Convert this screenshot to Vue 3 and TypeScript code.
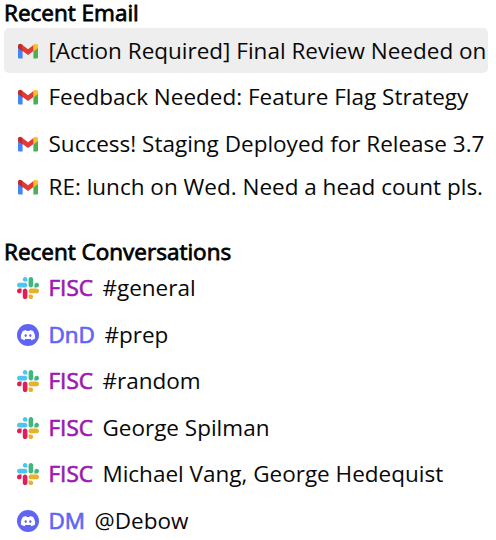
<script setup lang="ts">
type Service = 'slack' | 'discord'

interface Email {
  subject: string
  selected?: boolean
}

interface Conversation {
  service: Service
  workspace: string
  name: string
}

const emails: Email[] = [
  { subject: '[Action Required] Final Review Needed on', selected: true },
  { subject: 'Feedback Needed: Feature Flag Strategy' },
  { subject: 'Success! Staging Deployed for Release 3.7' },
  { subject: 'RE: lunch on Wed. Need a head count pls.' },
]

const conversations: Conversation[] = [
  { service: 'slack', workspace: 'FISC', name: '#general' },
  { service: 'discord', workspace: 'DnD', name: '#prep' },
  { service: 'slack', workspace: 'FISC', name: '#random' },
  { service: 'slack', workspace: 'FISC', name: 'George Spilman' },
  { service: 'slack', workspace: 'FISC', name: 'Michael Vang, George Hedequist' },
  { service: 'discord', workspace: 'DM', name: '@Debow' },
]
</script>

<template>
  <main class="panel">
    <section class="emails">
      <h2 class="heading">Recent Email</h2>
      <ul class="list">
        <li v-for="mail in emails" :key="mail.subject" class="row" :class="{ selected: mail.selected }">
          <svg class="icon" viewBox="0 0 22 22">
            <path fill="#4285f4" d="M1 5v12.200c0 .8.6 1.400 1.400 1.400H5.600V9z" />
            <path fill="#4caf50" d="M21 5v12.200c0 .8-.6 1.400-1.400 1.400h-3.200V9z" />
            <path fill="#e53935" d="M5.200 4.700 11 9.200l5.800-4.500v6L11 15.100l-5.800-4.400z" />
            <path fill="#c62828" d="M1 5.800v2.300l4.600 3.400V5l-.9-.7C3.200 3.100 1 4.100 1 5.800z" />
            <path fill="#fbc02d" d="M21 5.800v2.300l-4.600 3.400V5l.9-.7c1.500-1.200 3.700-.2 3.700 1.500z" />
          </svg>
          <span class="label">{{ mail.subject }}</span>
        </li>
      </ul>
    </section>

    <section class="conversations">
      <h2 class="heading">Recent Conversations</h2>
      <ul class="list">
        <li v-for="chat in conversations" :key="chat.name" class="row">
          <svg v-if="chat.service === 'slack'" class="icon" viewBox="0 0 122.800 122.800">
            <path fill="#e01e5a" d="M25.800 77.600c0 7.100-5.800 12.900-12.900 12.900S0 84.700 0 77.600s5.800-12.900 12.900-12.900h12.900v12.900zm6.500 0c0-7.100 5.800-12.900 12.900-12.900s12.900 5.800 12.900 12.900v32.300c0 7.100-5.800 12.900-12.900 12.900s-12.900-5.800-12.900-12.900V77.600z" />
            <path fill="#4dc4f2" d="M45.200 25.800c-7.100 0-12.900-5.800-12.900-12.900S38.100 0 45.200 0s12.900 5.800 12.900 12.900v12.900H45.200zm0 6.500c7.100 0 12.900 5.800 12.900 12.900s-5.800 12.900-12.900 12.900H12.900C5.800 58.100 0 52.300 0 45.200s5.800-12.900 12.900-12.900h32.300z" />
            <path fill="#3eb67e" d="M97 45.200c0-7.100 5.800-12.900 12.900-12.900s12.900 5.800 12.900 12.900-5.800 12.900-12.900 12.900H97V45.200zm-6.500 0c0 7.100-5.800 12.900-12.900 12.900s-12.900-5.800-12.900-12.900V12.900C64.700 5.800 70.500 0 77.600 0s12.900 5.800 12.900 12.900v32.300z" />
            <path fill="#e8b12c" d="M77.600 97c7.100 0 12.900 5.800 12.900 12.900s-5.800 12.900-12.900 12.900-12.900-5.800-12.900-12.900V97h12.900zm0-6.500c-7.100 0-12.900-5.800-12.900-12.900s5.800-12.900 12.900-12.900h32.300c7.100 0 12.900 5.800 12.900 12.900s-5.800 12.900-12.900 12.900H77.600z" />
          </svg>
          <svg v-else class="icon" viewBox="0 0 22 22">
            <circle cx="11" cy="11" r="11" fill="#6064f2" />
            <path fill="#fff" d="M9.100 6c-1.300.2-2.300.5-3.300 1-1.600 2.500-2.100 5-1.900 7.500 1.200.9 2.400 1.400 3.700 1.700l.9-1.400c1.600.4 3.400.4 5 0l.9 1.400c1.300-.3 2.500-.8 3.700-1.700.2-2.500-.3-5-1.900-7.500-1-.5-2-.8-3.300-1l-.5 1c-.9-.1-1.900-.1-2.800 0z" />
            <ellipse cx="8.700" cy="11.600" rx="1.150" ry="1.300" fill="#6064f2" />
            <ellipse cx="13.300" cy="11.600" rx="1.150" ry="1.300" fill="#6064f2" />
          </svg>
          <span class="workspace" :class="chat.service">{{ chat.workspace }}</span>
          <span class="label">{{ chat.name }}</span>
        </li>
      </ul>
    </section>
  </main>
</template>

<style>
body {
  margin: 0;
  background: #fff;
}
</style>

<style scoped>
.panel {
  box-sizing: border-box;
  width: 496px;
  height: 540px;
  padding: 0 8px 0 4px;
  font-family: 'Open Sans', sans-serif;
  font-size: 22.500px;
  color: #080808;
}

.heading {
  height: 28px;
  margin: 0;
  font-weight: 400;
  font-size: 22.500px;
  line-height: 26px;
  white-space: nowrap;
  color: #000;
  -webkit-text-stroke: 0.800px currentColor;
}

.list {
  margin: 0;
  padding: 0;
  list-style: none;
}

.row {
  display: flex;
  align-items: center;
  box-sizing: border-box;
  height: 46.500px;
  padding-left: 12.500px;
  white-space: nowrap;
}

.emails .row {
  height: 47px;
}

.emails .row.selected {
  height: 45px;
  border-radius: 5px;
  background: #eee;
}

.emails .row:last-child {
  height: 40px;
}

.conversations {
  padding-top: 32px;
}

.conversations .list {
  margin-top: -2px;
}

.icon {
  flex: none;
  width: 22px;
  height: 22px;
  margin-right: 10px;
}

.label {
  line-height: 32px;
}

.workspace {
  margin-right: 9.500px;
  line-height: 32px;
  -webkit-text-stroke: 0.700px currentColor;
}

.workspace.slack {
  color: #9c1ab1;
}

.workspace.discord {
  color: #5f66f5;
}
</style>
